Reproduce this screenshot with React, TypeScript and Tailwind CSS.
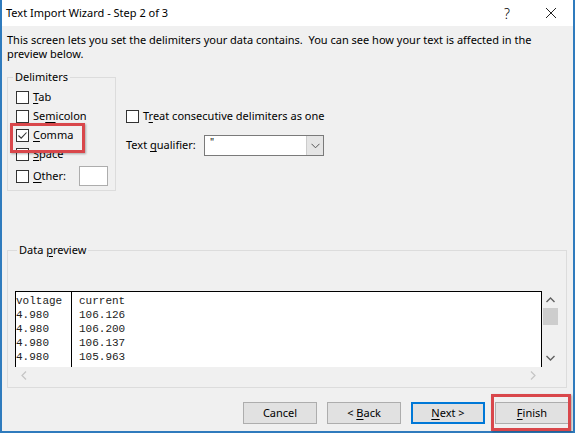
import React from "react";

const ui = "font-['Noto_Sans',_'Liberation_Sans',_sans-serif]";

function Box({ checked }: { checked?: boolean }) {
  return (
    <span className="w-[13px] h-[13px] shrink-0 border border-[#333] bg-white flex items-center justify-center">
      {checked && (
        <svg width="11" height="11" viewBox="0 0 11 11">
          <polyline points="1.5,5.5 4.2,8.2 9.5,2.5" fill="none" stroke="#333" strokeWidth="1.1" />
        </svg>
      )}
    </span>
  );
}

function Check({ label, checked }: { label: React.ReactNode; checked?: boolean }) {
  return (
    <div className="h-[19px] flex items-center gap-[4px]">
      <Box checked={checked} />
      <span>{label}</span>
    </div>
  );
}

function Key({ children }: { children: React.ReactNode }) {
  return <u className="underline-offset-2">{children}</u>;
}

function Btn({ children, primary }: { children: React.ReactNode; primary?: boolean }) {
  return (
    <button
      className={
        primary
          ? "w-[74px] h-[22px] bg-[#e1e1e1] border-2 border-[#0078d7] flex items-center justify-center"
          : "w-[74px] h-[22px] bg-[#e1e1e1] border border-[#adadad] flex items-center justify-center"
      }
    >
      <span>{children}</span>
    </button>
  );
}

const rows = [
  ["voltage", "current"],
  ["4.980", "106.126"],
  ["4.980", "106.200"],
  ["4.980", "106.137"],
  ["4.980", "105.963"],
];

export default function App() {
  return (
    <div className={`relative w-[575px] h-[433px] bg-[#f0f0f0] border-l-2 border-r-2 border-b-2 border-[#2f7bbd] flex flex-col text-[11px] text-black ${ui}`}>
      {/* title bar */}
      <div className="h-[26px] bg-white flex items-center pl-[4px] shrink-0">
        <span className="text-[11px]">Text Import Wizard - Step 2 of 3</span>
        <span className="ml-auto text-[14px] font-light w-[44px] text-center">?</span>
        <span className="w-[44px] flex justify-center">
          <svg width="12" height="12" viewBox="0 0 12 12">
            <path d="M1 1L11 11M11 1L1 11" stroke="#222" strokeWidth="1" />
          </svg>
        </span>
      </div>

      <p className="px-[5px] pt-[7px] leading-[14px]">
        This screen lets you set the delimiters your data contains.&nbsp; You can see how your text is affected in the
        <br />
        preview below.
      </p>

      <div className="flex mt-[9px] pl-[5px]">
        <fieldset className="w-[109px] h-[121px] border border-[#dcdcdc] pl-[8px] pt-[4px]">
          <legend className="px-[2px] -ml-[3px] leading-[14px]">Delimiters</legend>
          <Check label={<><Key>T</Key>ab</>} />
          <Check label={<>Se<Key>m</Key>icolon</>} />
          <Check label={<><Key>C</Key>omma</>} checked />
          <Check label={<><Key>S</Key>pace</>} />
          <div className="h-[20px] mt-[2px] flex items-center gap-[4px]">
            <Box />
            <span><Key>O</Key>ther:</span>
            <span className="ml-auto mr-[7px] w-[29px] h-[20px] bg-white border border-[#adadad]" />
          </div>
        </fieldset>

        <div className="ml-[10px] pt-[40px]">
          <div className="h-[13px] flex items-center gap-[4px]">
            <Box />
            <span>T<Key>r</Key>eat consecutive delimiters as one</span>
          </div>
          <div className="mt-[12px] h-[21px] flex items-center">
            <span className="w-[78px]">Text <Key>q</Key>ualifier:</span>
            <div className="w-[120px] h-[21px] bg-white border border-[#7a7a7a] flex">
              <span className="flex-1 pl-[5px] text-[10px] leading-[12px]">"</span>
              <span className="w-[17px] bg-[#e5e5e5] border-l border-[#ccc] flex items-center justify-center">
                <svg width="9" height="6" viewBox="0 0 9 6">
                  <polyline points="0.5,0.8 4.5,4.8 8.5,0.8" fill="none" stroke="#555" strokeWidth="1" />
                </svg>
              </span>
            </div>
          </div>
        </div>
      </div>

      {/* data preview */}
      <fieldset className="mt-[52px] ml-[5px] mr-[6px] h-[145px] border border-[#dcdcdc] pl-[7px] pt-[34px]">
        <legend className="px-[2px] ml-[2px] leading-[14px]">
          Data <Key>p</Key>review
        </legend>
        <div className="flex w-[544px]">
          <div className="w-[527px]">
            <div className="h-[76px] bg-white border-t border-l border-r border-black flex font-['Liberation_Mono',_monospace] text-[11px] text-[#222] leading-[14px] overflow-hidden">
              <div className="w-[56px] pt-[2px] border-r border-black">
                {rows.map((r, i) => (
                  <div key={i}>{r[0]}</div>
                ))}
              </div>
              <div className="pl-[7px] pt-[2px]">
                {rows.map((r, i) => (
                  <div key={i}>{r[1]}</div>
                ))}
              </div>
            </div>
            <div className="h-[17px] flex items-center justify-between px-[6px]">
              <svg width="6" height="9" viewBox="0 0 6 9">
                <polyline points="5,0.5 1,4.5 5,8.5" fill="none" stroke="#c4c4c4" strokeWidth="1.2" />
              </svg>
              <svg width="6" height="9" viewBox="0 0 6 9">
                <polyline points="1,0.5 5,4.5 1,8.5" fill="none" stroke="#c4c4c4" strokeWidth="1.2" />
              </svg>
            </div>
          </div>
          <div className="w-[17px] h-[76px] flex flex-col items-center">
            <svg className="mt-[6px]" width="9" height="6" viewBox="0 0 9 6">
              <polyline points="0.5,5 4.5,1 8.5,5" fill="none" stroke="#606060" strokeWidth="1.4" />
            </svg>
            <div className="mt-[5px] w-[15px] h-[17px] bg-[#cdcdcd]" />
            <svg className="mt-auto mb-[6px]" width="9" height="6" viewBox="0 0 9 6">
              <polyline points="0.5,1 4.5,5 8.5,1" fill="none" stroke="#606060" strokeWidth="1.4" />
            </svg>
          </div>
        </div>
      </fieldset>

      <div className="mt-[14px] pr-[4px] flex justify-end gap-[10px]">
        <Btn>Cancel</Btn>
        <Btn>&lt; <Key>B</Key>ack</Btn>
        <Btn primary><Key>N</Key>ext &gt;</Btn>
        <Btn><Key>F</Key>inish</Btn>
      </div>

      {/* red annotation boxes */}
      <div className="absolute left-[8px] top-[123px] w-[75px] h-[30px] border-[3px] border-[#d9474b] shadow-[1px_1px_2px_rgba(0,0,0,0.3)]" />
      <div className="absolute left-[489px] top-[394px] w-[80px] h-[37px] border-[3px] border-[#d9474b] shadow-[1px_1px_2px_rgba(0,0,0,0.3)]" />
    </div>
  );
}
